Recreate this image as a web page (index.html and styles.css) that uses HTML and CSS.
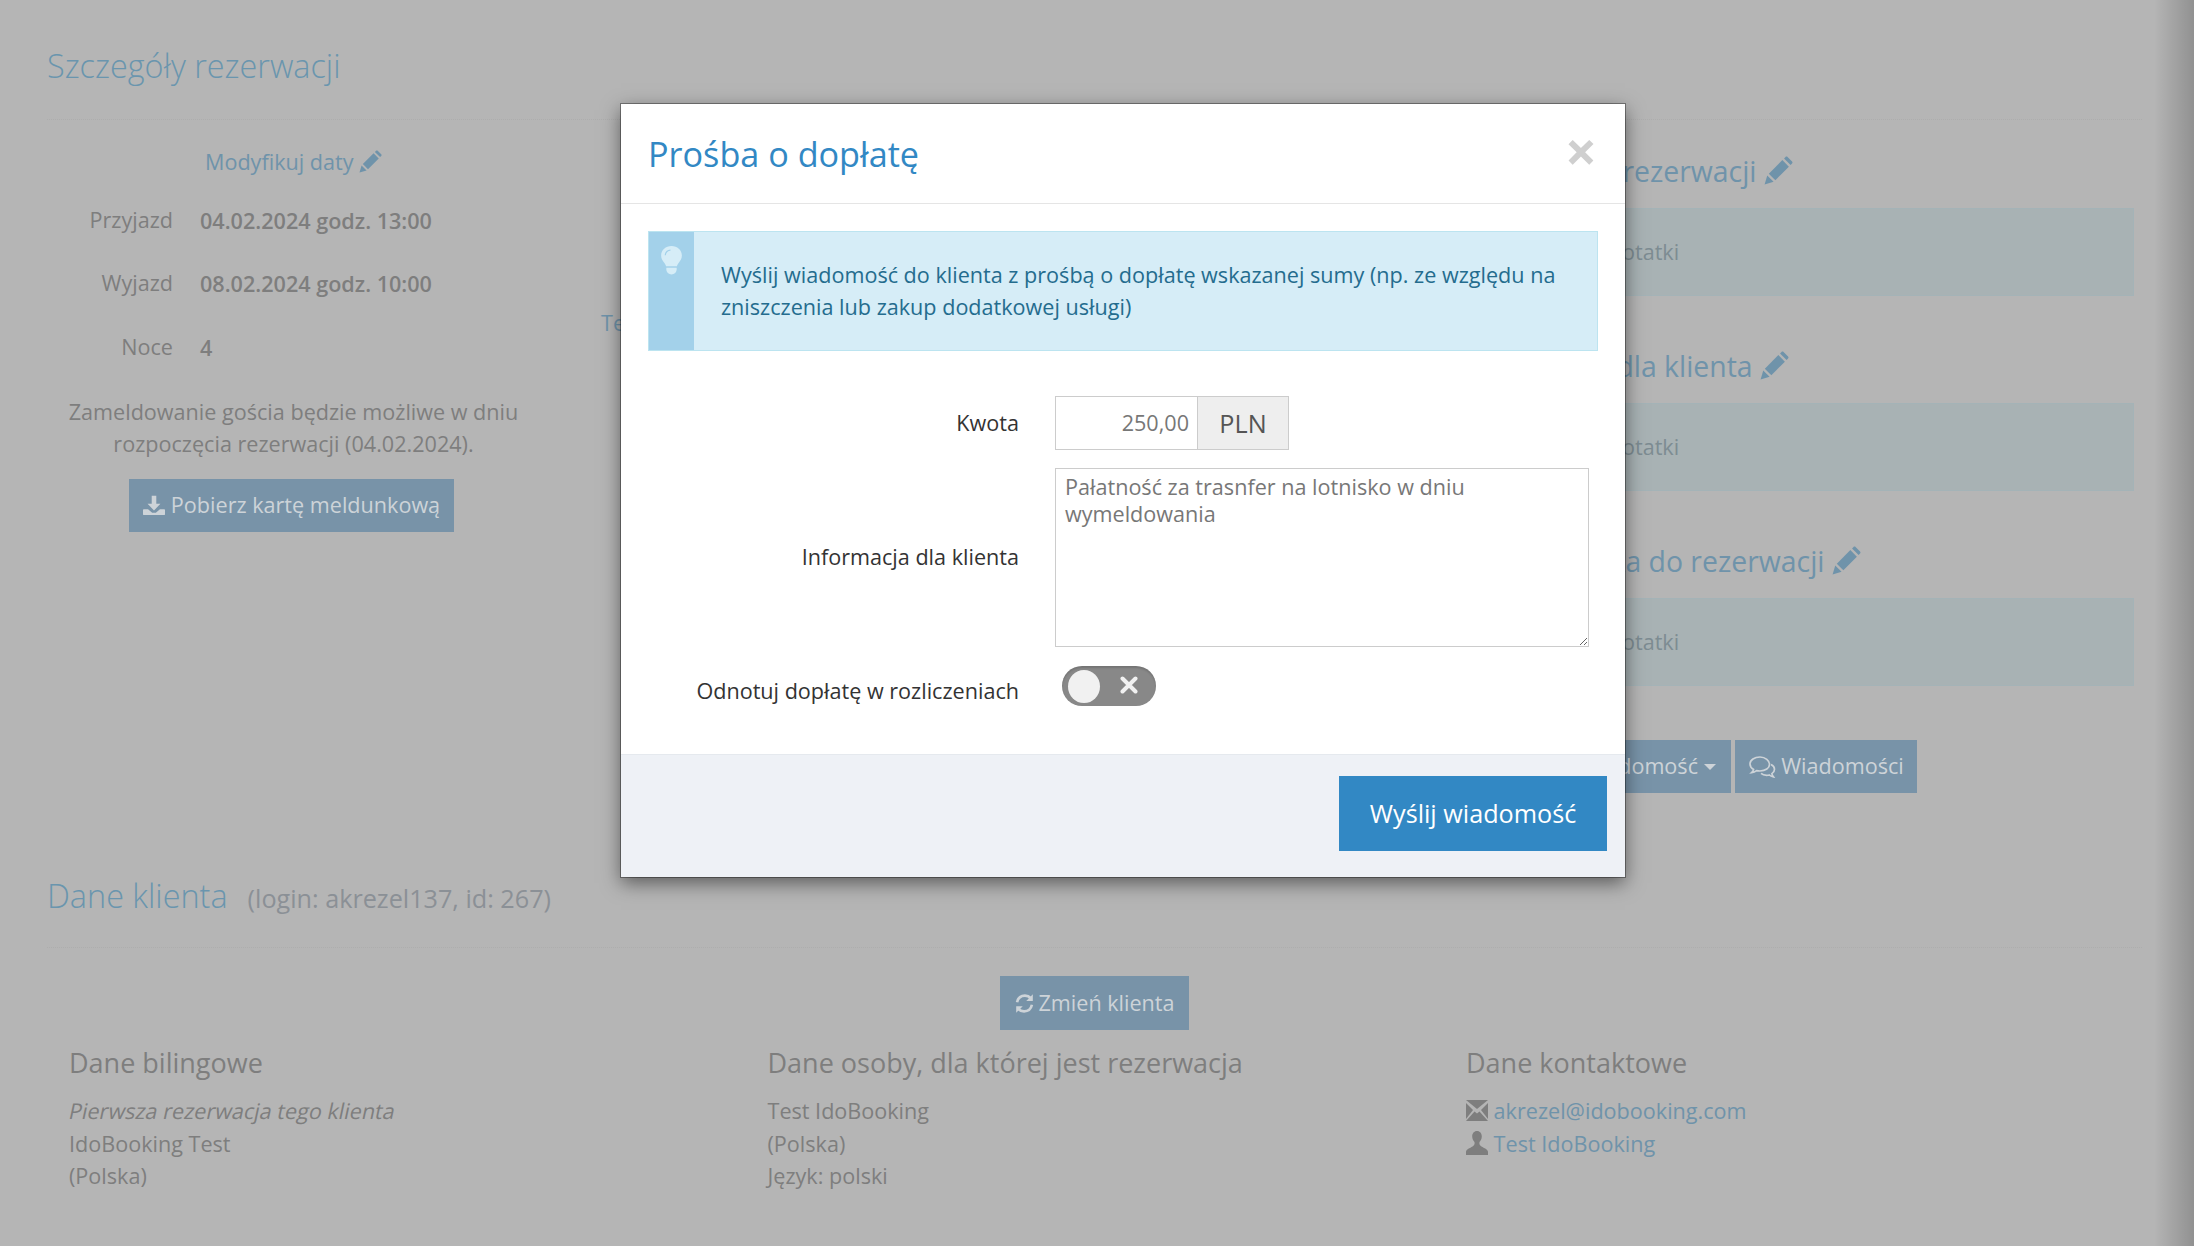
FILE: index.html
```html
<!DOCTYPE html>
<html lang="pl">
<head>
<meta charset="utf-8">
<title>Prośba o dopłatę</title>
<link rel="stylesheet" href="styles.css">
</head>
<body>
<svg class="defs" width="0" height="0" aria-hidden="true">
  <symbol id="pencil" viewBox="0 0 24 24"><path d="M0.5 23.5l2.2-7.4 5.2 5.2z"/><path d="M4 14.6L15.2 3.4l5.4 5.4L9.4 20z"/><path d="M16.6 2l1.2-1.2c.5-.5 1.2-.5 1.7 0l3.7 3.7c.5.5.5 1.2 0 1.7L22 7.4z"/></symbol>
</svg>

<main class="page">
  <header class="section-head"><h2 class="section-title">Szczegóły rezerwacji</h2></header>
  <div class="details">
    <div class="dates">
      <a class="modify">Modyfikuj daty <svg class="pencil-sm"><use href="#pencil"/></svg></a>
      <div class="date-row"><span class="date-label">Przyjazd</span><strong class="date-value">04.02.2024 godz. 13:00</strong></div>
      <div class="date-row"><span class="date-label">Wyjazd</span><strong class="date-value">08.02.2024 godz. 10:00</strong></div>
      <div class="date-row"><span class="date-label">Noce</span><span class="date-value">4</span></div>
      <p class="checkin-note">Zameldowanie gościa będzie możliwe w dniu rozpoczęcia rezerwacji (04.02.2024).</p>
      <a class="btn btn-card"><svg class="ico-btn" viewBox="0 0 24 24"><path d="M9.5 2h5v8.5H19l-7 7.5-7-7.5h4.500z"/><path d="M1 16.500h4.500l4.500 4h4l4.500-4H23c.5 0 1 .5 1 1V22c0 .5-.5 1-1 1H1c-.5 0-1-.5-1-1v-4.500c0-.5.5-1 1-1z"/></svg> Pobierz kartę meldunkową</a>
    </div>
    <div class="middle"><a class="link">Termin</a></div>
    <div class="notes">
      <h3 class="note-title nt-1">Uwagi rezerwacji <svg class="pencil-lg"><use href="#pencil"/></svg></h3>
      <div class="note-box">Brak notatki</div>
      <h3 class="note-title nt-2">Uwagi dla klienta <svg class="pencil-lg"><use href="#pencil"/></svg></h3>
      <div class="note-box">Brak notatki</div>
      <h3 class="note-title nt-3">Notatka do rezerwacji <svg class="pencil-lg"><use href="#pencil"/></svg></h3>
      <div class="note-box">Brak notatki</div>
      <div class="note-actions">
        <a class="btn btn-send-msg">Wyślij wiadomość <span class="caret"></span></a>
        <a class="btn btn-msgs"><svg class="ico-msg" viewBox="0 0 28 24" fill="none" stroke="currentColor" stroke-width="1.700"><path d="M12 2C6.500 2 2 5 2 9c0 2.300 1.500 4.200 3.600 5.400-.3 1.300-1 2.400-2 3.300 2-.2 3.700-1 5-2.100 1.100.3 2.200.4 3.400.4 5.500 0 9.500-3 9.500-6.600S17.500 2 12 2z"/><path d="M23 9.500c2.200 1 3.500 2.700 3.500 4.800 0 1.800-1 3.300-2.600 4.300.2 1.300.8 2.300 1.500 3.200-1.600-.2-3-.8-4-1.800-1 .2-1.700.3-2.700.3-2.300 0-4.400-.7-5.700-1.900"/></svg> Wiadomości</a>
      </div>
    </div>
  </div>

  <header class="section-head client-head"><h2 class="section-title">Dane klienta</h2><span class="login">(login: akrezel137, id: 267)</span></header>
  <div class="change-row"><a class="btn btn-change"><svg class="ico-ref" viewBox="0 0 24 24" fill="none" stroke="currentColor" stroke-width="3"><path d="M3.500 10.500C4.500 6 8 3 12.500 3c2.700 0 5 1.100 6.700 3"/><path d="M20.500 13.500C19.500 18 16 21 11.500 21c-2.700 0-5-1.100-6.700-3"/><path d="M21.500 1.500V9h-7.500z" fill="currentColor" stroke="none"/><path d="M2.500 22.500V15h7.500z" fill="currentColor" stroke="none"/></svg> Zmień klienta</a></div>
  <div class="client-cols">
    <section class="client-col">
      <h4 class="col-title">Dane bilingowe</h4>
      <p class="col-line"><em class="slanted">Pierwsza rezerwacja tego klienta</em></p>
      <p class="col-line">IdoBooking Test</p>
      <p class="col-line">(Polska)</p>
    </section>
    <section class="client-col">
      <h4 class="col-title">Dane osoby, dla której jest rezerwacja</h4>
      <p class="col-line">Test IdoBooking</p>
      <p class="col-line">(Polska)</p>
      <p class="col-line">Język: polski</p>
    </section>
    <section class="client-col">
      <h4 class="col-title">Dane kontaktowe</h4>
      <p class="col-line"><svg class="ico-contact" viewBox="0 0 22 24"><path d="M0 2h22L11 11z"/><path d="M0 5v16l7-9z"/><path d="M22 5v16l-7-9z"/><path d="M0 23l8.500-9.500L11 15.500l2.500-2L22 23z"/></svg> <a class="link">akrezel@idobooking.com</a></p>
      <p class="col-line"><svg class="ico-contact" viewBox="0 0 22 24"><path d="M11 0c3 0 4.800 2.400 4.800 5.500 0 2.600-1.200 4.500-2.300 5.500-.3 2 0 3.300 2 4.600 2.500 1.600 6.500 2.900 6.500 5.400V24H0v-3c0-2.500 4-3.800 6.500-5.400 2-1.300 2.300-2.600 2-4.600C7.400 10 6.200 8.100 6.200 5.500 6.200 2.400 8 0 11 0z"/></svg> <a class="link">Test IdoBooking</a></p>
    </section>
  </div>
</main>

<div class="edge-shade"></div>

<div class="modal" role="dialog">
  <header class="modal-head">
    <h1 class="modal-title">Prośba o dopłatę</h1>
    <span class="modal-close">×</span>
  </header>
  <div class="modal-body">
    <div class="alert">
      <div class="alert-side">
        <svg class="bulb" viewBox="0 0 20 28"><path class="bulb-glass" d="M10 0c5.500 0 10 3.900 10 9.200 0 3-1.400 5-2.800 6.800-1 1.300-1.700 2.400-1.900 3.600H4.700c-.2-1.200-.9-2.300-1.900-3.600C1.400 14.200 0 12.200 0 9.200 0 3.900 4.500 0 10 0z"/><path class="bulb-base" d="M5 21h10v1.500c0 2.800-2.300 5-5 5s-5-2.200-5-5z"/><path class="bulb-shine" d="M4 9c0-3 2.500-5 5-5" fill="none"/></svg>
      </div>
      <p class="alert-text">Wyślij wiadomość do klienta z prośbą o dopłatę wskazanej sumy (np. ze względu na zniszczenia lub zakup dodatkowej usługi)</p>
    </div>
    <form class="form">
      <label class="form-label label-amount">Kwota</label>
      <div class="amount"><input class="amount-input" type="text" value="250,00"><span class="amount-unit">PLN</span></div>
      <label class="form-label">Informacja dla klienta</label>
      <textarea class="message">Pałatność za trasnfer na lotnisko w dniu wymeldowania</textarea>
      <label class="form-label toggle-label">Odnotuj dopłatę w rozliczeniach</label>
      <div class="toggle"><span class="toggle-knob"></span><svg class="toggle-x" viewBox="0 0 18 18"><path d="M2.500 2.500l13 13M15.500 2.500l-13 13"/></svg></div>
    </form>
  </div>
  <footer class="modal-foot"><button class="btn-primary" type="button">Wyślij wiadomość</button></footer>
</div>
</body>
</html>
```

FILE: styles.css
```css
* { box-sizing: border-box; }
html, body { margin: 0; height: 100%; }
body {
  background: #b5b5b5;
  color: #7e7e7e;
  font-family: "Open Sans", "Liberation Sans", sans-serif;
  font-size: 21.600px;
  line-height: 32.500px;
  overflow: hidden;
  position: relative;
}
.defs { position: absolute; }
.page { padding: 42px 52px 0 47px; height: 1246px; }
a { color: #6f93aa; }
.section-head { border-bottom: 1px dotted #adadad; height: 78px; }
.section-title { margin: 0; font-weight: 300; font-size: 32.400px; line-height: 46px; color: #6a95ae; }
.details { display: grid; grid-template-columns: 554px 799px 734px; height: 750px; }
.dates { width: 493px; display: flex; flex-direction: column; align-items: stretch; }
.modify { margin: 26px 0 0 158px; height: 32px; display: block; }
.pencil-sm { width: 23px; height: 23px; fill: #6f93aa; vertical-align: -3px; }
.date-row { display: grid; grid-template-columns: 126px 1fr; column-gap: 27px; height: 63.500px; align-items: center; }
.date-row:first-of-type { margin-top: 10px; }
.date-label { text-align: right; }
.date-value { position: relative; top: 1px; font-weight: 600; }
.checkin-note { margin: 17px 0 0; text-align: center; }
.btn { display: inline-flex; align-items: center; justify-content: center; background: #7893a8; color: #cdd3d8; }
.btn-card { align-self: flex-start; margin: 18px 0 0 82px; width: 325px; height: 53px; gap: 6px; }
.ico-btn { width: 22px; height: 22px; fill: currentColor; }
.middle { padding-top: 187px; }
.link { color: #6f93aa; }
.note-title { margin: 31px 0 0; display: block; font-weight: 400; font-size: 28.400px; line-height: 40px; color: #6f93aa; height: 57px; white-space: nowrap; }
.note-title.nt-1 { padding-left: 134px; }
.note-title.nt-2 { padding-left: 128px; margin-top: 50px; }
.note-title.nt-3 { padding-left: 136px; margin-top: 50px; }
.pencil-lg { width: 29px; height: 29px; fill: #6f93aa; vertical-align: -3px; }
.note-box { height: 88px; background: #a8b2b4; border: 1px solid #a4b3b7; padding-left: 156px; line-height: 86px; color: #7d8c92; }
.note-actions { display: flex; gap: 4px; margin-top: 54px; padding-left: 121px; }
.btn-send-msg { width: 210px; height: 53px; justify-content: flex-end; padding-right: 15px; gap: 6px; white-space: nowrap; }
.caret { border: 6px solid transparent; border-top-color: currentColor; border-bottom: 0; }
.btn-msgs { width: 182px; height: 53px; gap: 5px; }
.ico-msg { width: 28px; height: 24px; }
.client-head { display: flex; align-items: baseline; gap: 20px; padding-top: 2px; }
.login { color: #8b9096; font-size: 25.200px; }
.change-row { display: flex; justify-content: center; margin-top: 28px; }
.btn-change { width: 189px; height: 54px; gap: 3px; white-space: nowrap; }
.ico-ref { width: 21px; height: 21px; }
.client-cols { display: grid; grid-template-columns: repeat(3, 698.500px); padding-left: 22px; margin-top: 13px; }
.col-title { margin: 0; font-weight: 400; font-size: 27px; line-height: 40px; height: 52px; }
.col-line { margin: 0; height: 32.500px; }
.slanted { display: inline-block; font-style: normal; transform: translateX(-3px) skewX(-12deg); transform-origin: left bottom; }
.ico-contact { width: 22px; height: 24px; fill: #7e7e7e; vertical-align: -3px; }

.edge-shade { position: absolute; top: 0; right: 0; bottom: 0; width: 40px; background: linear-gradient(to right, rgba(0,0,0,0), rgba(0,0,0,.2)); }

.modal {
  position: absolute;
  left: 621px;
  top: 104px;
  width: 1004px;
  height: 773px;
  background: #fff;
  box-shadow: 0 0 0 1px rgba(0,0,0,.35), 0 6px 18px rgba(0,0,0,.5);
  display: flex;
  flex-direction: column;
  color: #333;
}
.modal-head { height: 100px; border-bottom: 1px solid #e5e5e5; display: flex; justify-content: space-between; padding: 0 28px 0 27px; }
.modal-title { margin: 27px 0 0; font-weight: 400; font-size: 34.200px; line-height: 46px; color: #3288c4; }
.modal-close { font-weight: 700; font-size: 56px; line-height: 46px; margin-top: 23px; color: #cfcfcf; }
.modal-body { flex: 1; padding: 27px 27px 0; }
.alert { display: flex; height: 120px; background: #d6edf7; border: 1px solid #bce4f0; }
.alert-side { flex: 0 0 45px; background: #a3d1ea; padding: 14px 0 0 12px; }
.bulb { display: block; width: 21px; height: 29px; }
.bulb-glass, .bulb-base { fill: #d6edf7; }
.bulb-shine { stroke: #a3d1ea; stroke-width: 1.200; }
.alert-text { margin: 0; padding: 27px 20px 0 27px; color: #246c8e; font-size: 21.600px; line-height: 32px; }
.form { display: grid; grid-template-columns: 371px 1fr; column-gap: 36px; margin-top: 45px; align-items: center; }
.form-label { text-align: right; color: #333; }
.label-amount { margin-bottom: 18px; }
.amount { display: flex; width: 234px; height: 54px; margin-bottom: 18px; }
.amount-input { width: 142px; border: 1px solid #ccc; border-right: 0; text-align: right; padding: 0 8px 0 0; font: inherit; color: #777; outline: 0; }
.amount-unit { flex: 1; background: #eee; border: 1px solid #ccc; text-align: center; line-height: 52px; font-size: 25.200px; color: #555; }
.message { width: 534px; height: 179px; border: 1px solid #ccc; padding: 5px 9px; font: inherit; line-height: 26.500px; color: #777; outline: 0; display: block; }
.toggle-label { margin-top: 28px; }
.toggle { position: relative; align-self: start; width: 94px; height: 40px; margin: 19px 0 0 7px; background: #888; border-radius: 20px; box-shadow: inset 0 2px 2px rgba(0,0,0,.15); }
.toggle-knob { position: absolute; left: 6px; top: 4px; width: 32px; height: 33px; border-radius: 50%; background: #f1f1f1; }
.toggle-x { position: absolute; left: 58px; top: 10px; width: 18px; height: 18px; stroke: #f1f1f1; stroke-width: 4; stroke-linecap: round; }
.modal-foot { height: 123px; background: #eef1f6; border-top: 1px solid #e5e9ee; display: flex; justify-content: flex-end; padding: 21px 18px 0 0; }
.btn-primary { width: 268px; height: 75px; background: #3288c4; color: #fff; border: 0; font: inherit; font-size: 25.200px; }
```
